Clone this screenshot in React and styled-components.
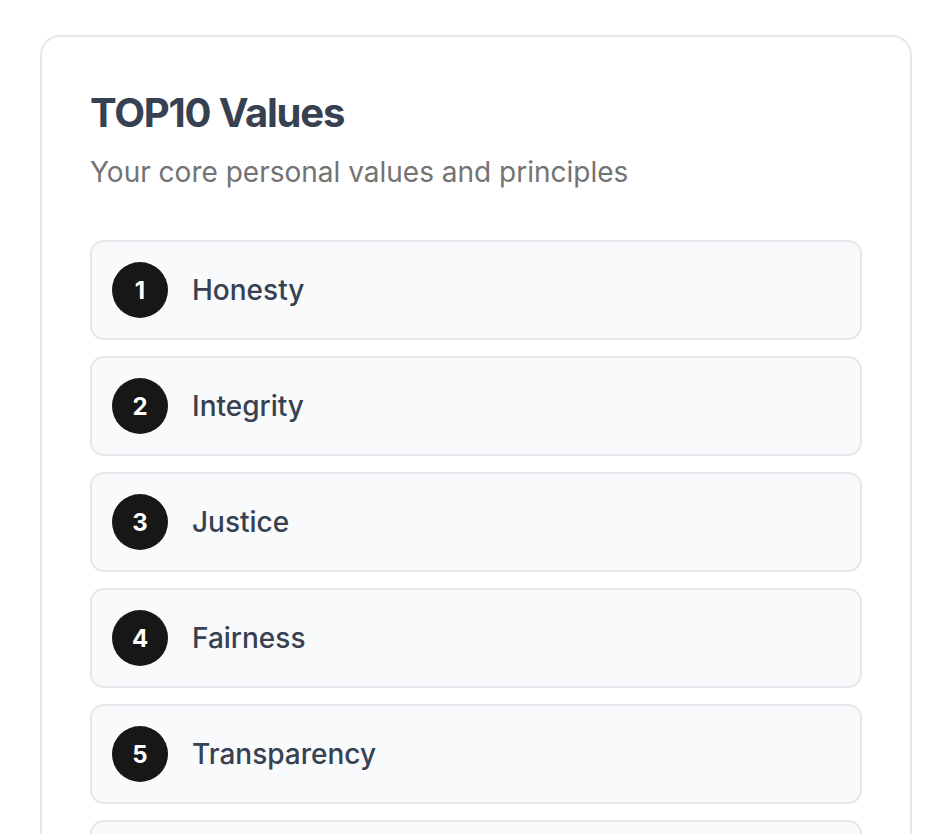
import React from 'react';
import styled, { createGlobalStyle } from 'styled-components';

const GlobalStyle = createGlobalStyle`
  body {
    margin: 0;
    background: #ffffff;
    font-family: Inter, "Noto Sans", sans-serif;
  }
`;

const Page = styled.div`
  padding: 35px 30px 0 40px;
`;

const Card = styled.section`
  border: 2px solid #e5e7eb;
  border-radius: 20px;
  padding: 52px 48px 48px 48px;
  background: #ffffff;
`;

const Title = styled.h2`
  margin: 0;
  font-size: 40px;
  line-height: 48px;
  font-weight: 700;
  color: #374151;
  letter-spacing: -1.2px;
`;

const Subtitle = styled.p`
  margin: 15px 0 0;
  font-size: 28px;
  line-height: 40px;
  color: #737373;
`;

const List = styled.ol`
  list-style: none;
  margin: 48px 0 0;
  padding: 0;
  display: flex;
  flex-direction: column;
  gap: 16px;
`;

const Item = styled.li`
  display: flex;
  align-items: center;
  gap: 24px;
  padding: 20px;
  border: 2px solid #e5e7eb;
  border-radius: 14px;
  background: #f9fafb;
`;

const Badge = styled.span`
  flex: none;
  width: 56px;
  height: 56px;
  border-radius: 50%;
  background: #171717;
  color: #ffffff;
  display: flex;
  align-items: center;
  justify-content: center;
  font-size: 24px;
  font-weight: 700;
`;

const Label = styled.span`
  font-size: 28px;
  font-weight: 500;
  color: #374151;
`;

const values = [
  'Honesty',
  'Integrity',
  'Justice',
  'Fairness',
  'Transparency',
  'Respect',
  'Responsibility',
  'Compassion',
  'Courage',
  'Humility',
];

export default function App() {
  return (
    <>
      <GlobalStyle />
      <Page>
        <Card>
          <Title>TOP10 Values</Title>
          <Subtitle>Your core personal values and principles</Subtitle>
          <List>
            {values.map((v, i) => (
              <Item key={v}>
                <Badge>{i + 1}</Badge>
                <Label>{v}</Label>
              </Item>
            ))}
          </List>
        </Card>
      </Page>
    </>
  );
}
